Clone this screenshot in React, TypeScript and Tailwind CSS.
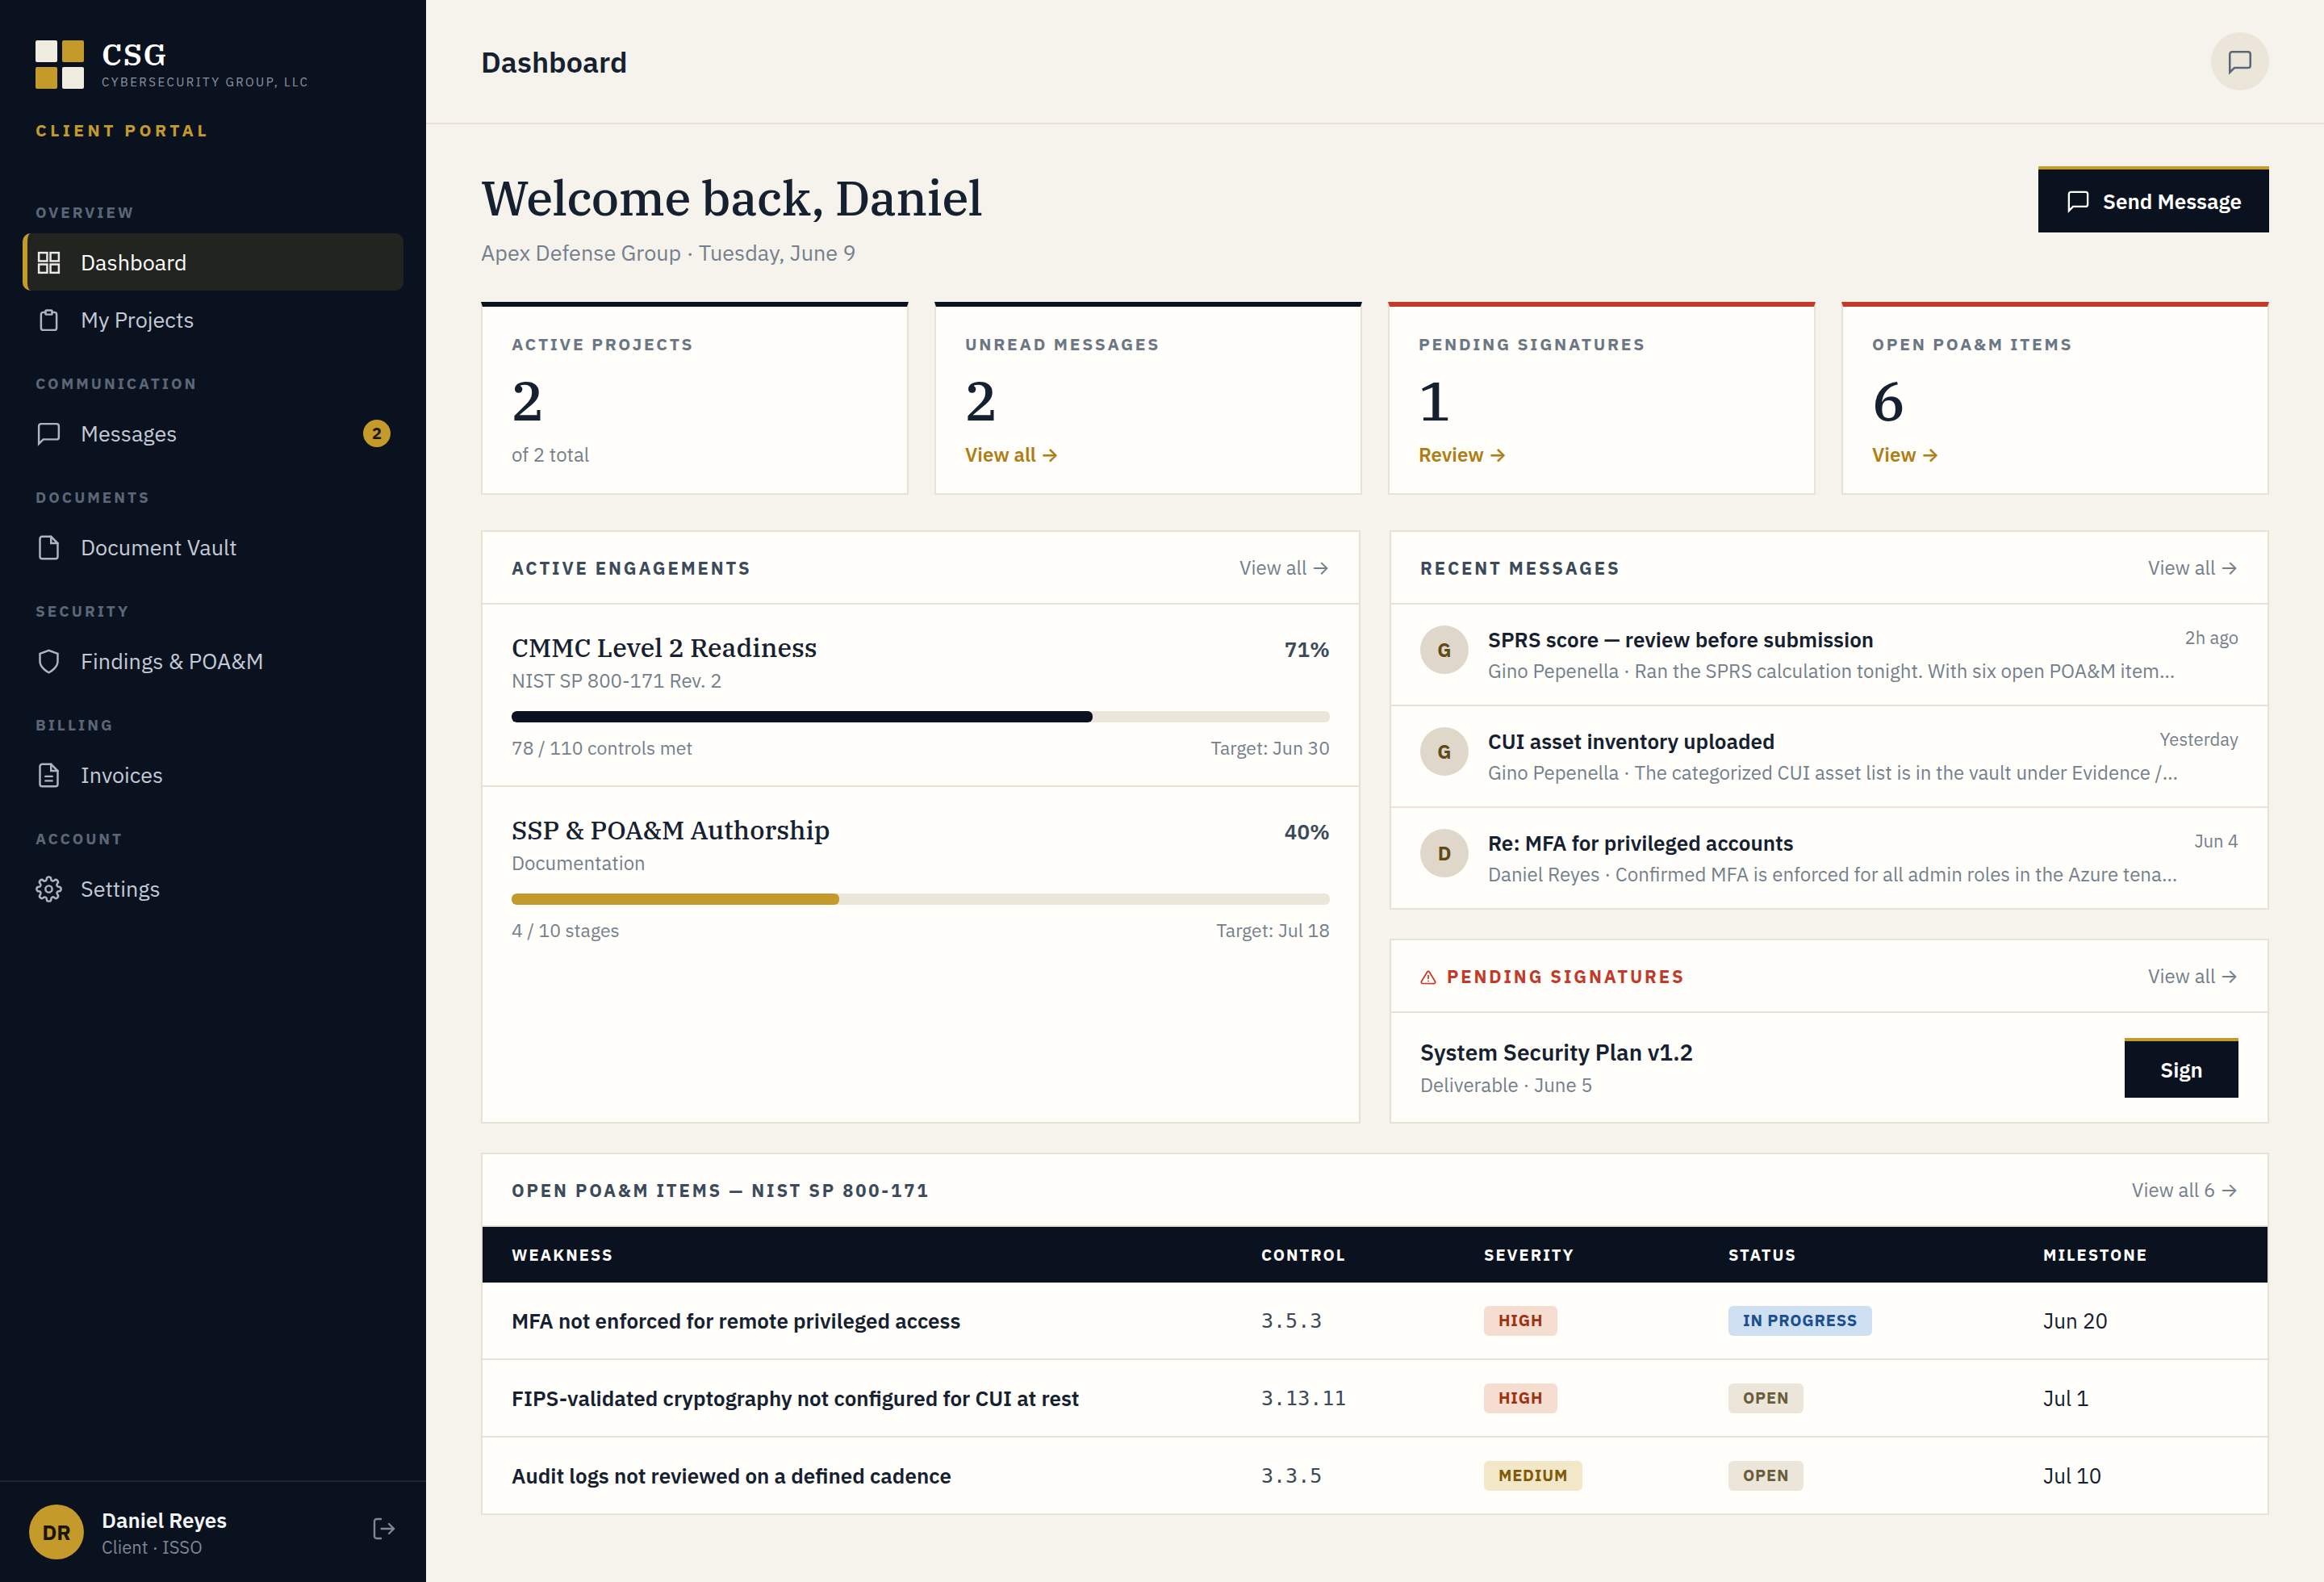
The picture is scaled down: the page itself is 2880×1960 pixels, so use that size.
import type { ReactNode } from 'react'
import { clsx } from 'clsx'

const SANS = "font-['IBM_Plex_Sans',Roboto,sans-serif]"
const SERIF = "font-['IBM_Plex_Serif','DejaVu_Serif_Condensed',serif]"
const MONO = "font-['DejaVu_Sans_Mono',monospace]"

const ICONS: Record<string, ReactNode> = {
  grid: (
    <>
      <rect x="3" y="3" width="7.5" height="7.5" />
      <rect x="13.5" y="3" width="7.5" height="7.5" />
      <rect x="3" y="13.5" width="7.5" height="7.5" />
      <rect x="13.5" y="13.5" width="7.5" height="7.5" />
    </>
  ),
  clipboard: (
    <>
      <path d="M9 5H7a2 2 0 0 0-2 2v12a2 2 0 0 0 2 2h10a2 2 0 0 0 2-2V7a2 2 0 0 0-2-2h-2" />
      <rect x="9" y="3.2" width="6" height="3.8" rx="1" />
    </>
  ),
  message: <path d="M21 15a2 2 0 0 1-2 2H7l-4 4V5a2 2 0 0 1 2-2h14a2 2 0 0 1 2 2z" />,
  file: (
    <>
      <path d="M14 2H6a2 2 0 0 0-2 2v16a2 2 0 0 0 2 2h12a2 2 0 0 0 2-2V8z" />
      <path d="M14 2v6h6" />
    </>
  ),
  shield: <path d="M12 22s8-4 8-10V5l-8-3-8 3v7c0 6 8 10 8 10z" />,
  invoice: (
    <>
      <path d="M14 2H6a2 2 0 0 0-2 2v16a2 2 0 0 0 2 2h12a2 2 0 0 0 2-2V8z" />
      <path d="M14 2v6h6M9 13h6M9 17h6" />
    </>
  ),
  settings: (
    <>
      <circle cx="12" cy="12" r="3" />
      <path d="M19.4 15a1.65 1.65 0 0 0 .33 1.82l.06.06a2 2 0 0 1-2.83 2.83l-.06-.06a1.65 1.65 0 0 0-1.82-.33 1.65 1.65 0 0 0-1 1.51V21a2 2 0 0 1-4 0v-.09A1.65 1.65 0 0 0 9 19.4a1.65 1.65 0 0 0-1.82.33l-.06.06a2 2 0 0 1-2.83-2.83l.06-.06a1.65 1.65 0 0 0 .33-1.82 1.65 1.65 0 0 0-1.51-1H3a2 2 0 0 1 0-4h.09A1.65 1.65 0 0 0 4.6 9a1.65 1.65 0 0 0-.33-1.82l-.06-.06a2 2 0 0 1 2.83-2.83l.06.06A1.65 1.65 0 0 0 9 4.6a1.65 1.65 0 0 0 1-1.51V3a2 2 0 0 1 4 0v.09a1.65 1.65 0 0 0 1 1.51 1.65 1.65 0 0 0 1.82-.33l.06-.06a2 2 0 0 1 2.83 2.83l-.06.06a1.65 1.65 0 0 0-.33 1.82 1.65 1.65 0 0 0 1.51 1H21a2 2 0 0 1 0 4h-.09a1.65 1.65 0 0 0-1.51 1z" />
    </>
  ),
  logout: (
    <>
      <path d="M9 21H5a2 2 0 0 1-2-2V5a2 2 0 0 1 2-2h4" />
      <path d="M16.5 7.5 21 12l-4.5 4.5M21 12H9.5" />
    </>
  ),
  alert: (
    <>
      <path d="M10.3 3.9 1.8 18a2 2 0 0 0 1.7 3h17a2 2 0 0 0 1.7-3L13.7 3.9a2 2 0 0 0-3.4 0z" />
      <path d="M12 9v4.5M12 17.2v.1" />
    </>
  ),
}

function Icon({ name, className, stroke = 1.8 }: { name: string; className: string; stroke?: number }) {
  return (
    <svg viewBox="0 0 24 24" fill="none" stroke="currentColor" strokeWidth={stroke} strokeLinecap="round" className={clsx('shrink-0', className)}>
      {ICONS[name]}
    </svg>
  )
}

const NAV: { section: string; items: { label: string; icon: string; badge?: number }[] }[] = [
  { section: 'Overview', items: [{ label: 'Dashboard', icon: 'grid' }, { label: 'My Projects', icon: 'clipboard' }] },
  { section: 'Communication', items: [{ label: 'Messages', icon: 'message', badge: 2 }] },
  { section: 'Documents', items: [{ label: 'Document Vault', icon: 'file' }] },
  { section: 'Security', items: [{ label: 'Findings & POA&M', icon: 'shield' }] },
  { section: 'Billing', items: [{ label: 'Invoices', icon: 'invoice' }] },
  { section: 'Account', items: [{ label: 'Settings', icon: 'settings' }] },
]

const STATS = [
  { label: 'Active Projects', value: 2, note: 'of 2 total', link: false, urgent: false },
  { label: 'Unread Messages', value: 2, note: 'View all', link: true, urgent: false },
  { label: 'Pending Signatures', value: 1, note: 'Review', link: true, urgent: true },
  { label: 'Open POA&M Items', value: 6, note: 'View', link: true, urgent: true },
]

const ENGAGEMENTS = [
  { name: 'CMMC Level 2 Readiness', kind: 'NIST SP 800-171 Rev. 2', pct: 71, done: '78 / 110 controls met', target: 'Jun 30', bar: 'bg-[#0b121f]' },
  { name: 'SSP & POA&M Authorship', kind: 'Documentation', pct: 40, done: '4 / 10 stages', target: 'Jul 18', bar: 'bg-[#c49a2a]' },
]

const MESSAGES = [
  { from: 'Gino Pepenella', subject: 'SPRS score — review before submission', body: 'Ran the SPRS calculation tonight. With six open POA&M item…', when: '2h ago' },
  { from: 'Gino Pepenella', subject: 'CUI asset inventory uploaded', body: 'The categorized CUI asset list is in the vault under Evidence /…', when: 'Yesterday' },
  { from: 'Daniel Reyes', subject: 'Re: MFA for privileged accounts', body: 'Confirmed MFA is enforced for all admin roles in the Azure tena…', when: 'Jun 4' },
]

const POAM = [
  { weakness: 'MFA not enforced for remote privileged access', control: '3.5.3', severity: 'High', status: 'In Progress', milestone: 'Jun 20' },
  { weakness: 'FIPS-validated cryptography not configured for CUI at rest', control: '3.13.11', severity: 'High', status: 'Open', milestone: 'Jul 1' },
  { weakness: 'Audit logs not reviewed on a defined cadence', control: '3.3.5', severity: 'Medium', status: 'Open', milestone: 'Jul 10' },
]

const BADGE: Record<string, string> = {
  High: 'bg-[#f5ddd0] text-[#9c3412]',
  Medium: 'bg-[#f2e7c6] text-[#80590c]',
  'In Progress': 'bg-[#d0e0f3] text-[#1c4f91]',
  Open: 'bg-[#ece6da] text-[#6b5d3a]',
}

const COLS = 'grid grid-cols-[929px_276px_303px_390px_1fr] items-center pl-9'

function Arrow() {
  return <span className="font-[Inter,sans-serif]">→</span>
}

function Badge({ label }: { label: string }) {
  return (
    <span className={clsx('inline-flex h-[37px] items-center rounded-md px-[18px] text-[20px] font-bold uppercase tracking-[0.04em]', BADGE[label])}>
      {label}
    </span>
  )
}

function Panel({ title, link = 'View all', alert, className, children }: { title: string; link?: string; alert?: boolean; className?: string; children: ReactNode }) {
  return (
    <section className={clsx('border-2 border-[#e8e2d5] bg-[#fffefa]', className)}>
      <div className="flex h-[90px] items-center justify-between border-b-2 border-[#e8e2d5] px-9">
        <h2 className={clsx('flex items-center gap-[13px] text-[22px] font-bold uppercase tracking-[0.13em]', alert ? 'text-[#c23b2a]' : 'text-[#3c4b5c]')}>
          {alert && <Icon name="alert" stroke={2.1} className="mt-[3px] size-5" />}
          {title}
        </h2>
        <a className="text-[24px] leading-8 text-[#74808c]">{link} <Arrow /></a>
      </div>
      {children}
    </section>
  )
}

function Sidebar() {
  return (
    <aside className="flex w-[528px] shrink-0 flex-col bg-[#0b121f]">
      <div className="mt-12 flex h-16 items-center gap-[22px] px-11">
        <div className="grid grid-cols-2 gap-1.5">
          <i className="size-[27px] rounded-[2px] bg-[#f1ece0]" />
          <i className="size-[27px] rounded-[2px] bg-[#c49a2a]" />
          <i className="size-[27px] rounded-[2px] bg-[#c49a2a]" />
          <i className="size-[27px] rounded-[2px] bg-[#f1ece0]" />
        </div>
        <div className="flex flex-col gap-[7px]">
          <span className={clsx(SERIF, 'text-[38px] leading-[37px] font-semibold tracking-[0.04em] text-white')}>CSG</span>
          <span className="text-[15px] leading-5 tracking-[0.16em] text-[#8a94a3]">CYBERSECURITY GROUP, LLC</span>
        </div>
      </div>
      <div className="mt-[35px] px-11 text-[21px] leading-7 font-bold tracking-[0.213em] text-[#c49a2a]">CLIENT PORTAL</div>

      <nav className="mt-11 flex-1 px-7">
        {NAV.map(group => (
          <div key={group.section} className="pt-8">
            <div className="mb-3.5 pl-4 text-[19px] leading-6 font-bold uppercase tracking-[0.157em] text-[#5b6776]">{group.section}</div>
            {group.items.map(item => {
              const active = item.label === 'Dashboard'
              return (
                <a
                  key={item.label}
                  className={clsx(
                    'flex h-[71px] items-center gap-[23.5px] rounded-[10px] border-l-6 pt-px pr-4 pl-[9.5px] text-[27px]',
                    active ? 'border-[#c49a2a] bg-[#22241f] text-white' : 'border-transparent text-[#c3cad6]',
                  )}
                >
                  <Icon name={item.icon} className={clsx('size-[33px]', active ? 'text-[#e9e9e7]' : 'text-[#adb5c3]')} />
                  <span className="flex-1 leading-9">{item.label}</span>
                  {item.badge && (
                    <span className="flex size-[34px] items-center justify-center rounded-full bg-[#c49a2a] text-[20px] font-bold text-[#1c1606]">{item.badge}</span>
                  )}
                </a>
              )
            })}
          </div>
        ))}
      </nav>

      <div className="flex h-[126px] gap-[22px] border-t-2 border-[#1e2531] px-9 pt-7">
        <div className="flex size-[68px] items-center justify-center rounded-full bg-[#c49a2a] text-[26px] font-bold text-[#1c1606]">DR</div>
        <div className="flex flex-1 flex-col gap-1 pt-[3px]">
          <span className="text-[26px] leading-8 font-semibold text-[#f3f4f6]">Daniel Reyes</span>
          <span className="text-[22px] leading-7 text-[#7d8795]">Client · ISSO</span>
        </div>
        <Icon name="logout" className="mt-3.5 size-8 text-[#7d8795]" />
      </div>
    </aside>
  )
}

export default function App() {
  return (
    <div className={clsx(SANS, 'flex h-[1960px] w-[2880px] overflow-hidden bg-[#f6f3ec] text-[#152030]')}>
      <Sidebar />

      <div className="flex flex-1 flex-col">
        <header className="flex h-[154px] items-center justify-between border-b-2 border-[#e8e2d5] px-[68px]">
          <h1 className="pt-0.5 text-[36px] leading-[48px] font-semibold">Dashboard</h1>
          <button className="flex size-[72px] items-center justify-center rounded-full bg-[#ece6da]">
            <Icon name="message" className="mt-px size-[34px] text-[#5b6776]" />
          </button>
        </header>

        <main className="px-[68px] pt-[52px]">
          <div className="flex items-start justify-between">
            <div>
              <div className={clsx(SERIF, 'text-[60px] leading-[78px] font-medium tracking-[-0.01em]')}>Welcome back, Daniel</div>
              <p className="mt-[11px] text-[27px] leading-9 text-[#74808c]">Apex Defense Group · Tuesday, June 9</p>
            </div>
            <button className="flex h-[82px] items-center gap-[15.5px] border-t-4 border-[#c49a2a] bg-[#0b121f] px-[34px] text-[26px] font-semibold text-white">
              <Icon name="message" className="size-[31px]" />
              Send Message
            </button>
          </div>

          <div className="mt-[43px] grid grid-cols-4 gap-8">
            {STATS.map(s => (
              <div
                key={s.label}
                className={clsx('h-[239px] border-2 border-t-6 border-[#e8e2d5] bg-[#fffefa] px-9 pt-8', s.urgent ? 'border-t-[#c23b2a]' : 'border-t-[#0b121f]')}
              >
                <div className="text-[21px] leading-7 font-bold uppercase tracking-[0.13em] text-[#6b7785]">{s.label}</div>
                <div className={clsx(SERIF, 'mt-[22px] text-[68px] leading-[68px] font-medium')}>{s.value}</div>
                <div className={clsx('mt-[17px] text-[24px] leading-8', s.link ? 'font-semibold text-[#b07d12]' : 'text-[#74808c]')}>
                  {s.note}
                  {s.link && <> <Arrow /></>}
                </div>
              </div>
            ))}
          </div>

          <div className="mt-11 grid grid-cols-2 gap-9">
            <Panel title="Active Engagements">
              {ENGAGEMENTS.map((e, i) => (
                <div key={e.name} className={clsx('px-9 pt-[33px] pb-8', i === 0 && 'border-b-2 border-[#e8e2d5]')}>
                  <div className="flex h-10 items-baseline justify-between leading-10">
                    <span className={clsx(SERIF, 'text-[32px] font-medium')}>{e.name}</span>
                    <span className="text-[26px] font-semibold text-[#3c4b5c]">{e.pct}%</span>
                  </div>
                  <div className="mt-[5px] text-[24px] leading-8 text-[#74808c]">{e.kind}</div>
                  <div className="mt-[22px] h-3.5 overflow-hidden rounded-md bg-[#ece6da]">
                    <div className={clsx('h-full rounded-md', e.bar)} style={{ width: `${e.pct}%` }} />
                  </div>
                  <div className="mt-4 flex justify-between text-[23px] leading-[30px] text-[#74808c]">
                    <span>{e.done}</span>
                    <span>Target: {e.target}</span>
                  </div>
                </div>
              ))}
            </Panel>

            <div className="flex flex-col gap-9">
              <Panel title="Recent Messages">
                {MESSAGES.map((m, i) => (
                  <div key={m.subject} className={clsx('flex gap-6 px-9 py-[26px]', i < 2 && 'border-b-2 border-[#e8e2d5]')}>
                    <div className="flex size-[60px] items-center justify-center rounded-full bg-[#dfd8ca] text-[24px] font-bold text-[#5f4b18]">{m.from[0]}</div>
                    <div className="flex-1">
                      <div className="flex items-start justify-between">
                        <span className="text-[26px] leading-[34px] font-semibold">{m.subject}</span>
                        <span className="pt-px text-[22px] leading-7 text-[#74808c]">{m.when}</span>
                      </div>
                      <div className="mt-1.5 whitespace-nowrap text-[24px] leading-8 text-[#74808c]">{m.from} · {m.body}</div>
                    </div>
                  </div>
                ))}
              </Panel>

              <Panel title="Pending Signatures" alert>
                <div className="flex items-center justify-between px-9 py-[30px]">
                  <div>
                    <div className="text-[28px] leading-[38px] font-semibold">System Security Plan v1.2</div>
                    <div className="mt-[5px] text-[24px] leading-8 text-[#74808c]">Deliverable · June 5</div>
                  </div>
                  <button className="h-[74px] w-[141px] border-t-4 border-[#c49a2a] bg-[#0b121f] pt-0.5 text-[26px] font-semibold text-white">Sign</button>
                </div>
              </Panel>
            </div>
          </div>

          <Panel title="Open POA&M Items — NIST SP 800-171" link="View all 6" className="mt-9">
            <div className={clsx(COLS, 'h-[69px] bg-[#0b121f] text-[20px] font-bold uppercase tracking-[0.1em] text-white')}>
              {['Weakness', 'Control', 'Severity', 'Status', 'Milestone'].map(h => <span key={h}>{h}</span>)}
            </div>
            {POAM.map((row, i) => (
              <div key={row.control} className={clsx(COLS, 'text-[26px]', i < 2 ? 'h-24 border-b-2 border-[#e8e2d5]' : 'h-[94px]')}>
                <span className="font-semibold">{row.weakness}</span>
                <span className={clsx(MONO, 'pt-0.5 text-[25px] text-[#3c4b5c]')}>{row.control}</span>
                <span className="flex"><Badge label={row.severity} /></span>
                <span className="flex"><Badge label={row.status} /></span>
                <span>{row.milestone}</span>
              </div>
            ))}
          </Panel>
        </main>
      </div>
    </div>
  )
}
